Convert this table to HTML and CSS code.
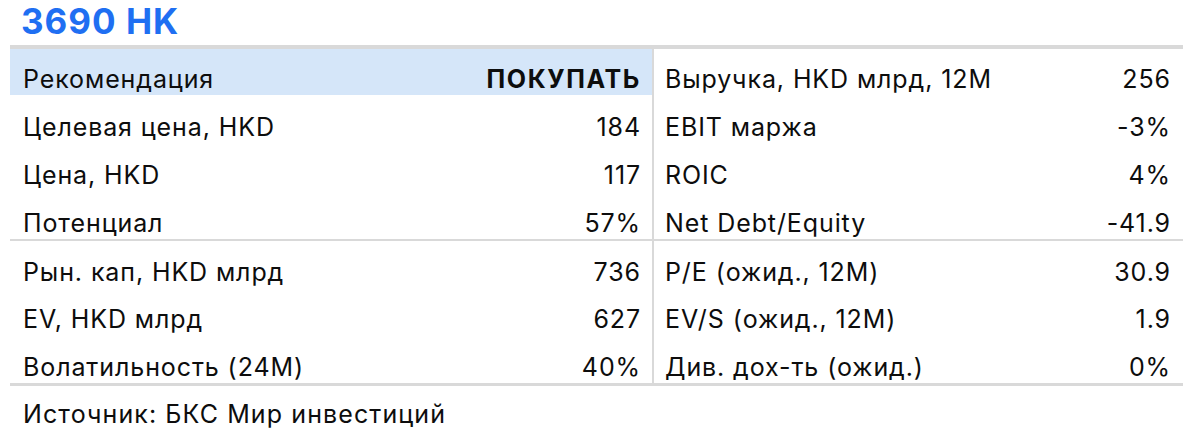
FILE: index.html
```html
<!DOCTYPE html>
<html>
<head>
    <title>3690 HK</title>
    <link rel="stylesheet" href="styles.css">
</head>
<body>
    <h1 class="ticker">3690 HK</h1>

    <div class="sheet">
        <div class="group">
            <div class="row head">
                <div class="cell left"><span>Рекомендация</span><b>ПОКУПАТЬ</b></div>
                <div class="cell right"><span>Выручка, HKD млрд, 12M</span><span>256</span></div>
            </div>
            <div class="row">
                <div class="cell left"><span>Целевая цена, HKD</span><span>184</span></div>
                <div class="cell right"><span>EBIT маржа</span><span>-3%</span></div>
            </div>
            <div class="row">
                <div class="cell left"><span>Цена, HKD</span><span>117</span></div>
                <div class="cell right"><span>ROIC</span><span>4%</span></div>
            </div>
            <div class="row">
                <div class="cell left"><span>Потенциал</span><span>57%</span></div>
                <div class="cell right"><span>Net Debt/Equity</span><span>-41.9</span></div>
            </div>
        </div>
        <div class="group last">
            <div class="row short">
                <div class="cell left"><span>Рын. кап, HKD млрд</span><span>736</span></div>
                <div class="cell right"><span>P/E (ожид., 12M)</span><span>30.9</span></div>
            </div>
            <div class="row short">
                <div class="cell left"><span>EV, HKD млрд</span><span>627</span></div>
                <div class="cell right"><span>EV/S (ожид., 12M)</span><span>1.9</span></div>
            </div>
            <div class="row">
                <div class="cell left"><span>Волатильность (24M)</span><span>40%</span></div>
                <div class="cell right"><span>Див. дох-ть (ожид.)</span><span>0%</span></div>
            </div>
        </div>
    </div>

    <p class="source">Источник: БКС Мир инвестиций</p>
</body>
</html>
```

FILE: styles.css
```css
body { margin: 0; font-family: Inter, "Liberation Sans", sans-serif; color: #0d0d0d; background: #fff; }
.ticker { margin: 0; height: 45px; padding-left: 21px; font-size: 35px; line-height: 42px; font-weight: 700; color: #1f6ff2; letter-spacing: 1px; }
.sheet { margin-left: 10px; width: 1173px; border-top: 4px solid #d9d9d9; }
.group { border-bottom: 2px solid #d9d9d9; }
.group.last { border-bottom-width: 3px; }
.row { display: grid; grid-template-columns: 644px 529px; height: 48px; }
.row.head { height: 46px; }
.row.short { height: 47px; }
.cell { display: flex; justify-content: space-between; align-items: flex-end; font-size: 25px; line-height: 28px; letter-spacing: 0.9px; padding-bottom: 2px; box-sizing: border-box; }
.cell.left { padding-left: 13px; padding-right: 11px; border-right: 2px solid #d9d9d9; }
.cell.right { padding-left: 11px; padding-right: 12px; }
.head .left { background: #d5e6f9; }
.cell b { font-weight: 700; letter-spacing: 1.6px; }
.source { margin: 0; padding: 14px 0 0 23px; font-size: 25px; line-height: 28px; letter-spacing: 1.1px; }
```
